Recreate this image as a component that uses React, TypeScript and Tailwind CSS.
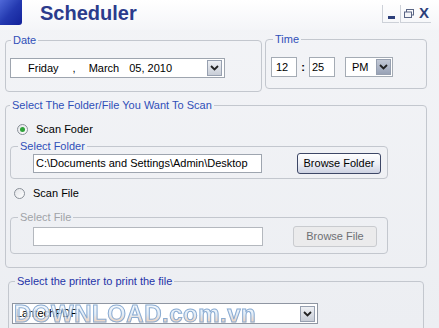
import React from "react";

const FONT = "font-['Liberation_Sans',Arial,sans-serif]";

// --- small building blocks ---
function Chevron({ dark = false }: { dark?: boolean }) {
  return (
    <div
      className={`flex items-center justify-center w-[15px] h-[16px] border border-[#97a0b0] ${
        dark ? "bg-gradient-to-b from-[#c3c9d6] to-[#98a2b6]" : "bg-gradient-to-b from-[#eef0f4] to-[#c8cdd7]"
      }`}
    >
      <svg width="9" height="6" viewBox="0 0 9 6">
        <path d="M1 1 L4.5 4.5 L8 1" fill="none" stroke="#222" strokeWidth="1.8" />
      </svg>
    </div>
  );
}

function Group({
  label,
  className,
  inner,
  legendClass = "text-[#2f4fb8]",
  legendMl = "ml-[6px]",
  children,
}: {
  label: string;
  className?: string;
  inner?: string;
  legendClass?: string;
  legendMl?: string;
  children: React.ReactNode;
}) {
  return (
    <fieldset className={`border border-[#c3c7ce] rounded-[4px] ${className ?? ""}`}>
      <legend className={`${legendMl} px-[2px] text-[11px] leading-[14px] ${legendClass}`}>{label}</legend>
      <div className={inner}>{children}</div>
    </fieldset>
  );
}

function Radio({ checked, label, ml }: { checked: boolean; label: string; ml: string }) {
  return (
    <div className={`flex items-center h-[16px] ${ml}`}>
      <div className="w-[11px] h-[11px] rounded-full border border-[#8a9099] bg-gradient-to-br from-[#e2e4e8] to-white flex items-center justify-center">
        {checked && <div className="w-[5px] h-[5px] rounded-full bg-[#2fa33a]" />}
      </div>
      <span className="ml-[8px] text-[11px] text-black">{label}</span>
    </div>
  );
}

export default function App() {
  return (
    <div className={`relative w-[439px] h-[328px] overflow-hidden bg-gradient-to-b from-[#f3f4f7] to-[#eceef2] ${FONT}`}>
      {/* header */}
      <div className="flex h-[30px] bg-gradient-to-b from-white to-[#f4f5f8]">
        <div className="w-[22px] h-[25px] bg-gradient-to-br from-[#5068d8] via-[#2439b0] to-[#13219a] rounded-br-[3px]" />
        <div className="ml-[18px] mt-[3px] text-[20px] leading-[20px] font-bold text-[#2b3b8c]">Scheduler</div>
        <div className="ml-auto mr-[8px] mt-[5px] flex">
          <div className="w-[17px] h-[18px] border-l border-b border-[#cdd1d8] flex items-end justify-center pb-[3px]">
            <div className="w-[7px] h-[3px] bg-[#2d3f7a]" />
          </div>
          <div className="w-[17px] h-[18px] ml-[1px] border-l border-b border-[#cdd1d8] flex items-center justify-center">
            <svg width="10" height="9" viewBox="0 0 10 9">
              <rect x="2.5" y="0.5" width="7" height="5.5" fill="none" stroke="#5a6584" />
              <rect x="0.5" y="3" width="7" height="5.5" fill="#f4f5f8" stroke="#5a6584" />
            </svg>
          </div>
          <div className="w-[14px] h-[18px] border-b border-[#cdd1d8] flex items-center justify-center text-[15px] font-bold text-[#2d3f7a]">
            X
          </div>
        </div>
      </div>

      {/* date + time */}
      <div className="flex items-start mt-[3px] ml-[5px]">
        <Group label="Date" className="w-[257px]" inner="pt-[11px] pb-[13px] px-[4px]" legendMl="ml-[5px]">
          <div className="flex items-center w-[215px] h-[20px] border border-[#9ea5af] bg-white text-[11px] text-black">
            <span className="ml-[17px]">Friday</span>
            <span className="ml-[14px]">,</span>
            <span className="ml-[13px]">March</span>
            <span className="ml-[10px]">05, 2010</span>
            <div className="ml-auto mr-[2px]">
              <Chevron />
            </div>
          </div>
        </Group>
        <Group label="Time" className="ml-[3px] -mt-[1px] w-[162px]" inner="pt-[11px] pb-[11px] px-[5px]" legendMl="ml-[7px]">
          <div className="flex items-center text-[11px] text-black">
            <div className="w-[26px] h-[20px] border border-[#a4abb4] bg-white flex items-center pl-[4px]">12</div>
            <span className="w-[12px] text-center font-bold">:</span>
            <div className="w-[26px] h-[20px] border border-[#a4abb4] bg-white flex items-center pl-[2px]">25</div>
            <div className="ml-[10px] w-[48px] h-[20px] border border-[#a4abb4] bg-white flex items-center pl-[6px]">
              <span>PM</span>
              <div className="ml-auto mr-[1px]">
                <Chevron dark />
              </div>
            </div>
          </div>
        </Group>
      </div>

      {/* folder / file */}
      <Group
        label="Select The Folder/File You Want To Scan"
        className="mt-[6px] ml-[5px] w-[422px]"
        inner="pt-[9px] pb-[13px] px-[4px]"
        legendMl="ml-[4px]"
      >
        <Radio checked label="Scan Foder" ml="ml-[7px]" />
        <Group label="Select Folder" className="mt-[2px] w-[378px]" inner="pl-[22px] pr-[5px] pb-[4px]" legendMl="ml-[7px]">
          <div className="flex items-center h-[21px]">
            <div className="w-[229px] h-[19px] border border-[#9ea5af] bg-white flex items-center pl-[2px] text-[11px] text-black">
              C:\Documents and Settings\Admin\Desktop
            </div>
            <button className="ml-[35px] w-[84px] h-[21px] rounded-[3px] border border-[#3d4766] bg-gradient-to-b from-white via-[#eef0f6] to-[#cdd2e2] text-[11px] text-black">
              Browse Folder
            </button>
          </div>
        </Group>
        <Radio checked={false} label="Scan File" ml="ml-[4px] mt-[6px]" />
        <Group
          label="Select File"
          className="mt-[9px] w-[378px]"
          inner="pt-[2px] pl-[22px] pr-[5px] pb-[6px]"
          legendClass="text-[#a0a3a8]"
          legendMl="ml-[7px]"
        >
          <div className="flex items-center h-[21px]">
            <div className="w-[230px] h-[19px] border border-[#b4b8be] bg-white" />
            <button className="ml-[30px] w-[84px] h-[21px] rounded-[3px] border border-[#c9cbcf] bg-[#ebebec] text-[11px] text-[#6d6f73]">
              Browse File
            </button>
          </div>
        </Group>
      </Group>

      {/* printer */}
      <Group
        label="Select the printer to print the file"
        className="mt-[6px] ml-[8px] w-[416px]"
        inner="pt-[15px] pl-[3px] pb-[10px]"
        legendClass="text-[#1f34a8]"
        legendMl="ml-[6px]"
      >
        <div className="flex items-center w-[306px] h-[21px] border border-[#8f96a2] bg-white text-[11px] text-black pl-[3px]">
          <span>LantechPDF</span>
          <div className="ml-auto mr-[2px]">
            <Chevron />
          </div>
        </div>
      </Group>

      {/* watermark */}
      <div className="absolute left-[14px] top-[301px] text-[24px] leading-[26px] font-bold tracking-[0.5px] bg-gradient-to-b from-white via-[#dbe9f7] to-[#f2b27c] bg-clip-text text-transparent [-webkit-text-stroke:1px_#6f98c8] opacity-80 pointer-events-none">
        DOWNLOAD.com.vn
      </div>
    </div>
  );
}
